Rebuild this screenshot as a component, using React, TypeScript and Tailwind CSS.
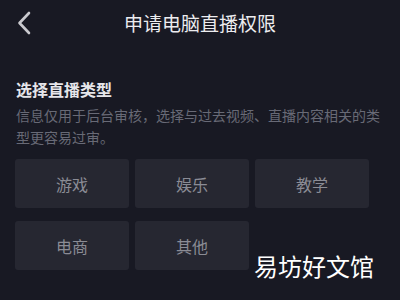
const categories = ["游戏", "娱乐", "教学", "电商", "其他"];

function BackIcon() {
  return (
    <svg width="16" height="24" viewBox="0 0 16 24" fill="none">
      <path d="M13 2 L3.5 12 L13 22" stroke="#c9c9ce" strokeWidth="2.6" strokeLinecap="round" strokeLinejoin="round" />
    </svg>
  );
}

export default function App() {
  return (
    <div
      className="relative w-[400px] h-[300px] overflow-hidden bg-[#181923]"
      style={{ fontFamily: '"Noto Sans CJK SC", "Noto Sans", sans-serif' }}
    >
      {/* Header */}
      <div className="grid h-[45px] grid-cols-[48px_1fr_48px] items-center">
        <div className="pl-[16px] pt-[1px]">
          <BackIcon />
        </div>
        <h1 className="text-center text-[19px] leading-none text-[#ececef]">申请电脑直播权限</h1>
        <div />
      </div>

      {/* Content */}
      <div className="px-[16px] pt-[33px]">
        <h2 className="text-[16px] font-bold leading-[22px] text-[#e6e6ea]">选择直播类型</h2>
        <p className="mt-[4px] text-[14px] leading-[22px] text-[#686a76]">
          信息仅用于后台审核，选择与过去视频、直播内容相关的类型更容易过审。
        </p>

        <div className="-ml-px mt-[11px] grid grid-cols-[114px_114px_114px] gap-x-[6px] gap-y-[13px]">
          {categories.map((c) => (
            <button
              key={c}
              type="button"
              className="flex h-[49px] items-center justify-center rounded-[3px] bg-[#262731] text-[16px] text-[#8b8c95]"
            >
              {c}
            </button>
          ))}
        </div>
      </div>

      {/* Watermark */}
      <div className="absolute left-[254px] top-[254px] text-[24px] leading-none text-white">易坊好文馆</div>
    </div>
  );
}
